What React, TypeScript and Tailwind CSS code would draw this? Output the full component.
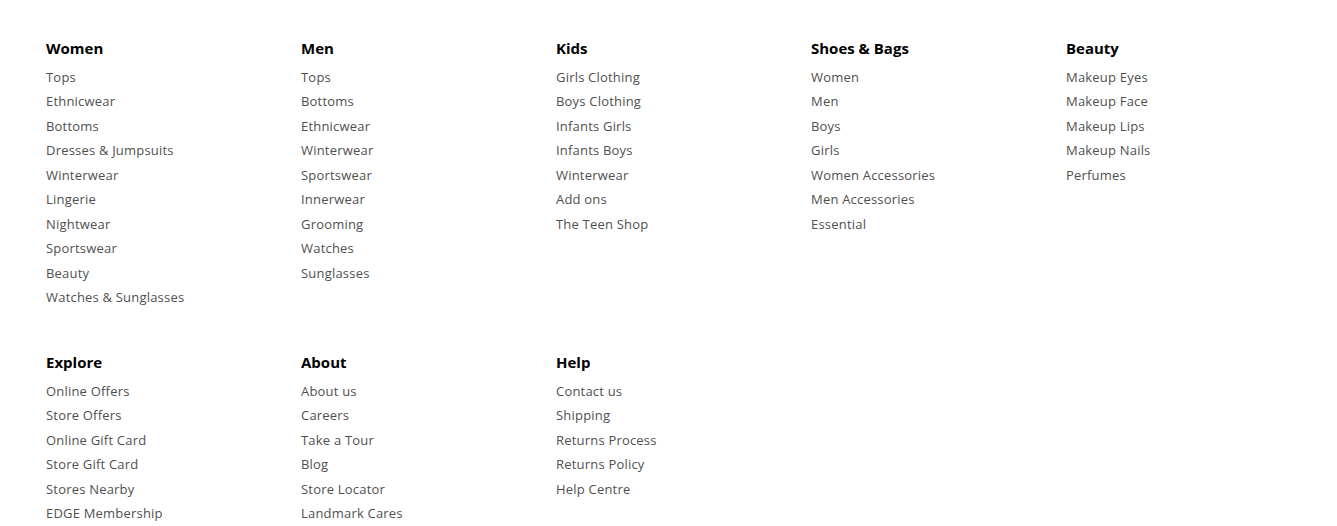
const top = [
  {
    title: 'Women',
    links: ['Tops', 'Ethnicwear', 'Bottoms', 'Dresses & Jumpsuits', 'Winterwear', 'Lingerie', 'Nightwear', 'Sportswear', 'Beauty', 'Watches & Sunglasses'],
  },
  {
    title: 'Men',
    links: ['Tops', 'Bottoms', 'Ethnicwear', 'Winterwear', 'Sportswear', 'Innerwear', 'Grooming', 'Watches', 'Sunglasses'],
  },
  {
    title: 'Kids',
    links: ['Girls Clothing', 'Boys Clothing', 'Infants Girls', 'Infants Boys', 'Winterwear', 'Add ons', 'The Teen Shop'],
  },
  {
    title: 'Shoes & Bags',
    links: ['Women', 'Men', 'Boys', 'Girls', 'Women Accessories', 'Men Accessories', 'Essential'],
  },
  {
    title: 'Beauty',
    links: ['Makeup Eyes', 'Makeup Face', 'Makeup Lips', 'Makeup Nails', 'Perfumes'],
  },
];

const bottom = [
  {
    title: 'Explore',
    links: ['Online Offers', 'Store Offers', 'Online Gift Card', 'Store Gift Card', 'Stores Nearby', 'EDGE Membership'],
  },
  {
    title: 'About',
    links: ['About us', 'Careers', 'Take a Tour', 'Blog', 'Store Locator', 'Landmark Cares'],
  },
  {
    title: 'Help',
    links: ['Contact us', 'Shipping', 'Returns Process', 'Returns Policy', 'Help Centre'],
  },
];

function Column({ title, links }: { title: string; links: string[] }) {
  return (
    <div>
      <h3 className="text-[15px] leading-5 font-bold text-black">{title}</h3>
      <ul className="mt-[6.5px]">
        {links.map((l) => (
          <li key={l} className="text-[13px] leading-[24.5px] tracking-[0.2px] text-[#505050]">
            <a href="#">{l}</a>
          </li>
        ))}
      </ul>
    </div>
  );
}

export default function App() {
  return (
    <footer className="bg-white min-h-[526px] px-[46px] pt-[38px] font-['Open_Sans','Liberation_Sans',sans-serif]">
      <div className="grid grid-cols-[repeat(5,255px)]">
        {top.map((c) => (
          <Column key={c.title} {...c} />
        ))}
      </div>
      <div className="grid grid-cols-[repeat(5,255px)] mt-[42.5px]">
        {bottom.map((c) => (
          <Column key={c.title} {...c} />
        ))}
      </div>
    </footer>
  );
}
